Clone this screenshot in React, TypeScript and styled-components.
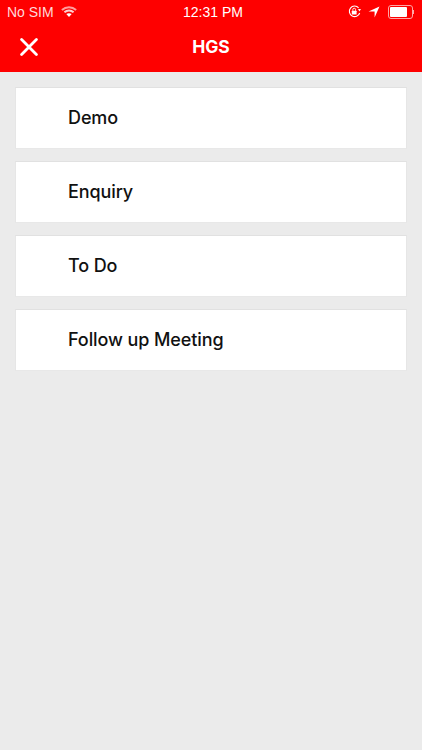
import styled, { createGlobalStyle } from "styled-components";

const GlobalStyle = createGlobalStyle`
  html, body {
    margin: 0;
    padding: 0;
    background: #ebebeb;
  }
`;

const items = ["Demo", "Enquiry", "To Do", "Follow up Meeting"];

function WifiIcon() {
  return (
    <svg width="16" height="11" viewBox="0 0 16 11" fill="none">
      <path d="M.9 3.9C5 .2 11 .2 15.1 3.9" stroke="#ff9c9c" strokeWidth="2" />
      <path d="M3.4 6.3c2.7-2.3 6.5-2.3 9.2 0" stroke="#ffd0d0" strokeWidth="2" />
      <path d="M5.3 8.1c1.6-1.2 3.8-1.2 5.4 0L8 11z" fill="#fff" />
    </svg>
  );
}

function LockIcon() {
  return (
    <svg width="13" height="13" viewBox="0 0 13 13" fill="none">
      <path d="M10.6 2.8A5.3 5.3 0 1 0 11.7 8" stroke="#fff" strokeWidth="1.1" />
      <path d="M10 4h3L11.4 6.4z" fill="#fff" />
      <rect x="3.8" y="5.8" width="4.8" height="3.6" rx=".5" fill="#fff" />
      <path d="M4.8 5.8V4.6a1.4 1.4 0 0 1 2.8 0v1.2" stroke="#fff" strokeWidth=".9" />
    </svg>
  );
}

function LocationIcon() {
  return (
    <svg width="12" height="12" viewBox="0 0 12 12">
      <path d="M11.5.5 6.6 11.5V5.4H.5z" fill="#fff" />
    </svg>
  );
}

function CloseIcon() {
  return (
    <svg width="18" height="18" viewBox="0 0 18 18" fill="none">
      <path d="M1.6 1.6l14.8 14.8M16.4 1.6 1.6 16.4" stroke="#fff" strokeWidth="2.8" strokeLinecap="round" />
    </svg>
  );
}

export default function App() {
  return (
    <Page>
      <GlobalStyle />
      <Header>
        <StatusBar>
          <StatusLeft>
            <span>No SIM</span>
            <WifiIcon />
          </StatusLeft>
          <StatusTime>12:31 PM</StatusTime>
          <StatusRight>
            <LockIcon />
            <LocationIcon />
            <Battery>
              <BatteryFill />
            </Battery>
            <BatteryCap />
          </StatusRight>
        </StatusBar>
        <TitleBar>
          <CloseButton>
            <CloseIcon />
          </CloseButton>
          <Title>HGS</Title>
        </TitleBar>
      </Header>
      <List>
        {items.map((item) => (
          <Card key={item}>{item}</Card>
        ))}
      </List>
    </Page>
  );
}

const Page = styled.div`
  width: 422px;
  height: 750px;
  overflow: hidden;
  background: #ebebeb;
  font-family: Inter, "Liberation Sans", sans-serif;
`;

const Header = styled.header`
  height: 72px;
  background: #fe0000;
  color: #fff;
`;

const StatusBar = styled.div`
  height: 23px;
  padding: 0 7px;
  display: grid;
  grid-template-columns: 1fr auto 1fr;
  align-items: center;
  font-family: "Liberation Sans", Arial, sans-serif;
  font-size: 14px;
  color: #fff;
`;

const StatusLeft = styled.div`
  display: flex;
  align-items: center;
  gap: 7px;
  color: #ffd9d9;
`;

const StatusTime = styled.div`
  margin-left: 4px;
  font-weight: 400;
`;

const StatusRight = styled.div`
  display: flex;
  align-items: center;
  justify-content: flex-end;
  gap: 7px;
  padding-right: 1px;
`;

const Battery = styled.div`
  width: 21px;
  height: 10px;
  border: 1px solid #ffa6a6;
  border-radius: 3px;
  padding: 1px;
  margin-left: 1px;
  box-sizing: content-box;
`;

const BatteryFill = styled.div`
  width: 17px;
  height: 100%;
  background: #fff;
  border-radius: 1px;
`;

const BatteryCap = styled.div`
  width: 1px;
  height: 4px;
  margin-left: -7px;
  background: #ffa6a6;
`;

const TitleBar = styled.div`
  height: 49px;
  position: relative;
  display: flex;
  align-items: center;
  justify-content: center;
`;

const CloseButton = styled.div`
  position: absolute;
  left: 20px;
  top: 15px;
  display: flex;
`;

const Title = styled.h1`
  margin: 0 0 2px;
  font-size: 17.5px;
  font-weight: 700;
  color: #fff;
`;

const List = styled.div`
  display: flex;
  flex-direction: column;
  gap: 12px;
  padding: 15px 15px 0;
`;

const Card = styled.div`
  height: 62px;
  display: flex;
  align-items: center;
  padding: 0 0 2px 52px;
  background: #fff;
  border-top: 1px solid #e1e1e1;
  border-left: 1px solid #e6e6e6;
  border-right: 1px solid #e6e6e6;
  border-bottom: 1px solid #e8e8e8;
  box-sizing: border-box;
  font-size: 18px;
  font-weight: 500;
  letter-spacing: -0.1px;
  color: #111;
`;
